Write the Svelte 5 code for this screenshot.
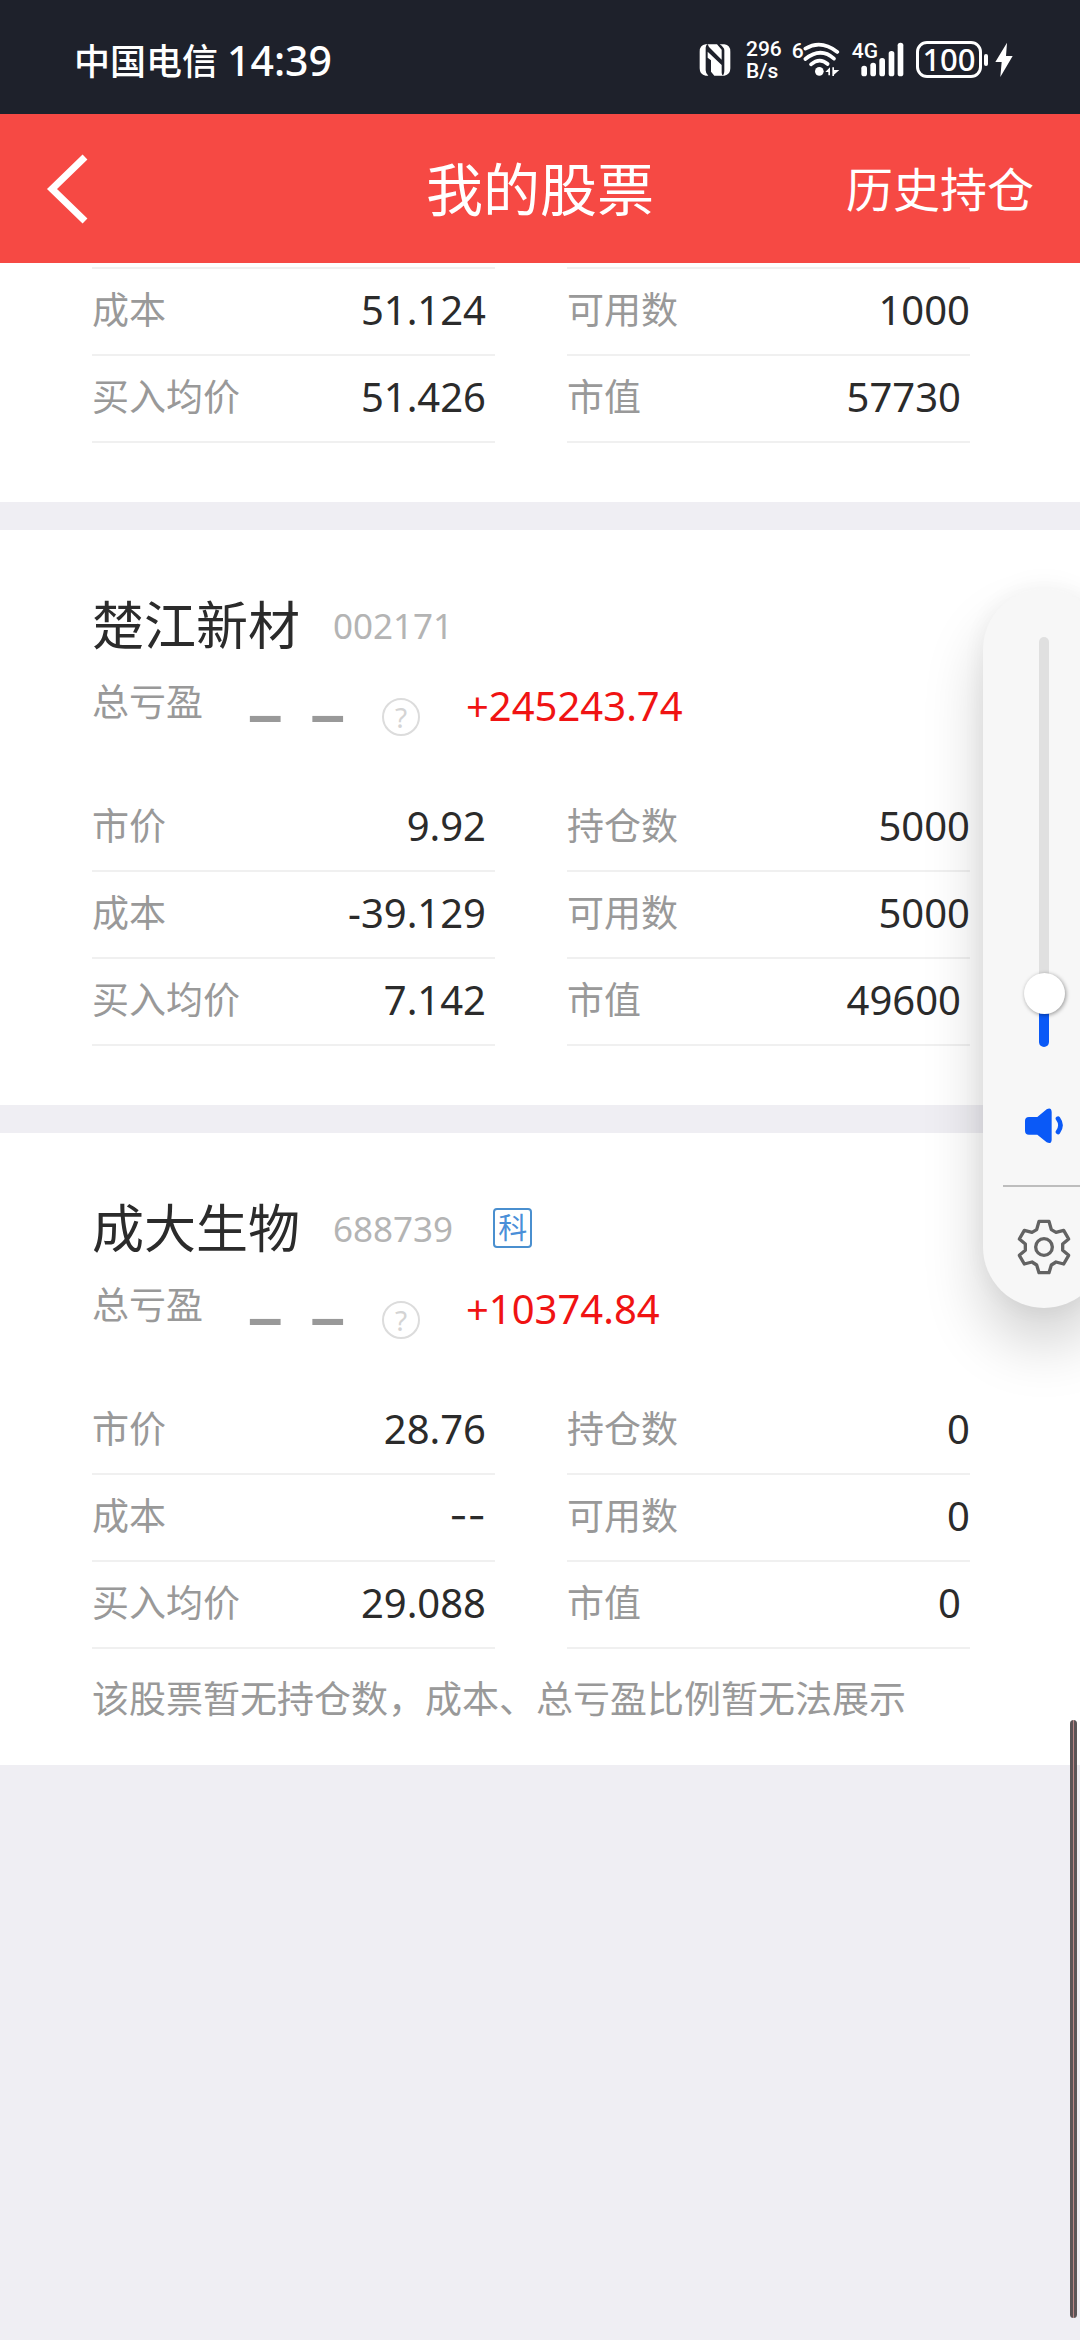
<script>
  const stocks = [
    {
      name: '楚江新材',
      code: '002171',
      tag: '',
      profit: '+245243.74',
      rows: [
        ['市价', '9.92', '持仓数', '5000'],
        ['成本', '-39.129', '可用数', '5000'],
        ['买入均价', '7.142', '市值', '49600']
      ],
      note: ''
    },
    {
      name: '成大生物',
      code: '688739',
      tag: '科',
      profit: '+10374.84',
      rows: [
        ['市价', '28.76', '持仓数', '0'],
        ['成本', '--', '可用数', '0'],
        ['买入均价', '29.088', '市值', '0']
      ],
      note: '该股票暂无持仓数，成本、总亏盈比例暂无法展示'
    }
  ];

  // only the last rows of the first stock are still in view
  const scrolledRows = [
    ['成本', '51.124', '可用数', '1000'],
    ['买入均价', '51.426', '市值', '57730']
  ];

  let volume = $state(9);
</script>

{#snippet figures(rows)}
  <div class="figures">
    {#each rows as [leftLabel, leftValue, rightLabel, rightValue]}
      <dl class="figure">
        <dt>{leftLabel}</dt>
        <dd class="inset" class:blank={leftValue === '--'}>{leftValue}</dd>
      </dl>
      <dl class="figure">
        <dt>{rightLabel}</dt>
        <dd class:inset={rightLabel === '市值'}>{rightValue}</dd>
      </dl>
    {/each}
  </div>
{/snippet}

<div class="status-bar">
  <div class="carrier">
    <span>中国电信</span>
    <span class="clock">14:39</span>
  </div>
  <div class="status-icons">
    <svg class="nfc" width="32" height="34" viewBox="0 0 96 102">
      <path fill="#fff" d="M20 4 Q2 6 2 26 V76 Q2 96 20 98 H28 Q20 92 20 82 V14 Q20 6 26 4 Z" />
      <path fill="#fff" d="M26 4 H54 L68 20 V50 L30 12 Z M26 26 L68 66 V90 Q68 96 74 98 H46 L36 86 V52 L26 44 Z" />
      <path fill="#fff" d="M62 4 H76 Q94 6 94 26 V76 Q94 96 76 98 H72 Q76 92 76 84 V22 Q76 14 62 4 Z" />
    </svg>
    <div class="speed">
      <span>296</span>
      <span>B/s</span>
    </div>
    <div class="wifi">
      <span class="small">6</span>
      <svg width="40" height="36" viewBox="0 0 120 108" fill="none" stroke="#fff" stroke-width="11" stroke-linecap="round">
        <path d="M10 20 Q57 -8 106 30" />
        <path d="M10 51 Q56 14 96 50" />
        <path d="M27 67 Q53 45 77 66" />
        <circle cx="52" cy="88" r="13" fill="#fff" stroke="none" />
        <path fill="#fff" stroke="none" d="M70 90 L84 76 V100 H79 V90 Z M96 102 V76 H91 V102 Z M96 98 L112 84 H96 Z" />
      </svg>
    </div>
    <div class="signal">
      <span class="small">4G</span>
      <svg width="44" height="36" viewBox="0 0 132 108" fill="#fff">
        <rect x="4" y="71" width="17" height="32" rx="8" />
        <rect x="31" y="62" width="17" height="41" rx="8" />
        <rect x="58" y="48" width="17" height="55" rx="8" />
        <rect x="86" y="27" width="17" height="76" rx="8" />
        <rect x="113" y="2" width="17" height="101" rx="8" />
      </svg>
    </div>
    <div class="battery">
      <span class="level">100</span>
      <span class="cap"></span>
      <svg width="18" height="36" viewBox="0 0 54 108">
        <path fill="#fff" d="M36 2 L1 60 H20 L16 105 L53 42 H33 Z" />
      </svg>
    </div>
  </div>
</div>

<header class="nav">
  <button class="back" type="button" aria-label="返回">
    <svg width="44" height="70" viewBox="0 0 44 70">
      <path d="M39 3 L6 35 L39 67" fill="none" stroke="#fff" stroke-width="7" />
    </svg>
  </button>
  <h1>我的股票</h1>
  <a class="history" href="#history">历史持仓</a>
</header>

<main>
  <section class="card scrolled">
    {@render figures(scrolledRows)}
  </section>

  {#each stocks as stock}
    <section class="card" class:noted={stock.note}>
      <div class="stock-title">
        <h2>{stock.name}</h2>
        <span class="code">{stock.code}</span>
        {#if stock.tag}
          <span class="tag">{stock.tag}</span>
        {/if}
      </div>
      <div class="profit">
        <span class="profit-label">总亏盈</span>
        <span class="dashes"><span>–</span><span>–</span></span>
        <button class="help" type="button" aria-label="总亏盈说明">?</button>
        <span class="profit-value">{stock.profit}</span>
      </div>
      {@render figures(stock.rows)}
      {#if stock.note}
        <p class="note">{stock.note}</p>
      {/if}
    </section>
  {/each}
</main>

<div class="scroll-thumb"></div>

<aside class="volume-panel">
  <input
    type="range"
    min="0"
    max="100"
    aria-label="音量"
    bind:value={volume}
    style="--level: {volume}%"
  />
  <button class="speaker" type="button" aria-label="静音">
    <svg width="40" height="40" viewBox="192 168 120 120">
      <path fill="#0a59f7" d="M207 201 H232 L260 178 Q274 171 275 186 V270 Q274 284 260 277 L232 254 H207 Q195 254 195 242 V213 Q195 201 207 201 Z" />
      <path d="M294 206 Q309 226 294 246" fill="none" stroke="#0a59f7" stroke-width="14" stroke-linecap="round" />
    </svg>
  </button>
  <hr />
  <button class="settings" type="button" aria-label="声音设置">
    <svg width="56" height="56" viewBox="168 508 168 168" fill="none" stroke="#636363" stroke-width="10" stroke-linejoin="round">
      <path d="M237 515 H267 L274 540 L288 548 L311 542 L326 568 L308 583 V602 L326 617 L311 643 L288 637 L274 646 L267 669 H237 L230 646 L216 637 L193 643 L178 617 L196 602 V583 L178 568 L193 542 L216 548 L230 540 Z" />
      <circle cx="252" cy="592" r="25" />
    </svg>
  </button>
</aside>

<style>
  :global(body) {
    margin: 0;
    background: #efeef3;
    font-family: "Noto Sans", "Noto Sans CJK SC", sans-serif;
    color: #2b2b2b;
  }

  button {
    padding: 0;
    border: 0;
    background: none;
    font: inherit;
    color: inherit;
  }

  svg {
    display: block;
  }

  .status-bar {
    display: flex;
    justify-content: space-between;
    align-items: center;
    height: 114px;
    padding: 5px 67px 0 74px;
    background: #1e212b;
    color: #fff;
    font-weight: 500;
    box-sizing: border-box;
  }

  .carrier {
    display: flex;
    align-items: center;
    gap: 9px;
    font-size: 36px;
  }

  .clock {
    font-size: 41px;
  }

  .status-icons {
    display: flex;
    align-items: center;
    gap: 10px;
  }

  .speed {
    display: flex;
    flex-direction: column;
    margin-left: 5px;
    font-family: Roboto, sans-serif;
    font-size: 21px;
    line-height: 22px;
  }

  .small {
    font-family: Roboto, sans-serif;
    font-size: 21px;
    line-height: 18px;
  }

  .wifi,
  .signal {
    display: flex;
    align-items: flex-start;
  }

  .wifi .small {
    margin-right: -2px;
  }

  .signal .small {
    margin-right: -18px;
  }

  .battery {
    display: flex;
    align-items: center;
    gap: 2px;
    margin-left: 2px;
  }

  .level {
    width: 66px;
    height: 37px;
    border: 3px solid #fff;
    border-radius: 11px;
    box-sizing: border-box;
    font-size: 31px;
    line-height: 31px;
    text-align: center;
  }

  .cap {
    width: 4px;
    height: 12px;
    margin-right: 5px;
    border-radius: 2px;
    background: #fff;
  }

  .nav {
    display: grid;
    grid-template-columns: 1fr auto 1fr;
    align-items: center;
    height: 149px;
    padding: 0 46px;
    background: #f64944;
    color: #fff;
    box-sizing: border-box;
  }

  .nav h1 {
    margin: 0;
    font-size: 57px;
    font-weight: 400;
    line-height: 80px;
  }

  .history {
    justify-self: end;
    color: inherit;
    font-size: 47px;
    line-height: 80px;
    text-decoration: none;
  }

  main {
    display: flex;
    flex-direction: column;
    gap: 28px;
  }

  .card {
    padding: 60px 110px 59px 92px;
    background: #fff;
  }

  .card.scrolled {
    padding-top: 4px;
  }

  .card.noted {
    padding-bottom: 36px;
  }

  .scrolled .figure:nth-child(-n + 2) {
    border-top: 2px solid #f0f0f0;
  }

  .stock-title {
    display: flex;
    align-items: center;
    height: 70px;
  }

  .stock-title h2 {
    margin: 0;
    font-size: 52px;
    font-weight: 400;
    line-height: 70px;
  }

  .code {
    margin-left: 33px;
    color: #b4b4b4;
    font-size: 35px;
  }

  .tag {
    margin-left: 40px;
    padding: 0 3px;
    border: 2px solid #4a8fcf;
    border-radius: 4px;
    color: #4a8fd8;
    font-size: 29px;
    line-height: 36px;
  }

  .profit {
    display: flex;
    align-items: center;
    height: 80px;
    margin-bottom: 45px;
  }

  .profit-label {
    color: #999;
    font-size: 37px;
  }

  .dashes {
    display: flex;
    gap: 28px;
    margin: 0 37px 0 45px;
    padding-top: 26px;
    color: #999;
    font-family: "Liberation Sans", sans-serif;
    font-size: 62px;
    font-weight: 700;
  }

  .help {
    width: 38px;
    height: 38px;
    margin: 34px 46px 0 0;
    border: 2px solid #dcdcdc;
    border-radius: 50%;
    color: #d4d4d4;
    font-size: 28px;
    line-height: 34px;
  }

  .profit-value {
    padding-top: 10px;
    color: #f01313;
    font-size: 40px;
  }

  .figures {
    display: grid;
    grid-template-columns: 1fr 1fr;
    column-gap: 72px;
  }

  .figure {
    display: flex;
    justify-content: space-between;
    align-items: center;
    height: 81px;
    margin: 0;
    padding-bottom: 4px;
    border-bottom: 2px solid #f0f0f0;
  }

  dt {
    color: #999;
    font-size: 37px;
    line-height: 78px;
  }

  dd {
    margin: 0;
    font-size: 40px;
    line-height: 78px;
  }

  .inset {
    padding-right: 9px;
  }

  .blank {
    font-family: Inter, sans-serif;
  }

  .note {
    margin: 20px 0 0;
    color: #999;
    font-size: 37px;
    line-height: 60px;
  }

  .scroll-thumb {
    position: fixed;
    right: 3px;
    bottom: 22px;
    width: 7px;
    height: 598px;
    border-radius: 4px;
    background: linear-gradient(to right, #5b5456 3px, #b98585 3px, #b98585 4px, #5b5456 4px);
  }

  .volume-panel {
    position: fixed;
    top: 589px;
    right: -25px;
    display: flex;
    flex-direction: column;
    align-items: center;
    width: 122px;
    height: 719px;
    padding-top: 48px;
    border-radius: 61px;
    background: #f7f7f7;
    box-shadow: 0 36px 60px rgba(0, 0, 0, 0.18), 0 0 30px rgba(0, 0, 0, 0.06);
    box-sizing: border-box;
  }

  .volume-panel input {
    appearance: none;
    writing-mode: vertical-lr;
    direction: rtl;
    width: 41px;
    height: 410px;
    margin: 0;
    background: none;
  }

  .volume-panel input::-webkit-slider-runnable-track {
    width: 10px;
    height: 410px;
    border-radius: 5px;
    background: linear-gradient(to top, #0a59f7 calc(var(--level) + 2%), #e0e0e0 calc(var(--level) + 2%));
  }

  .volume-panel input::-webkit-slider-thumb {
    appearance: none;
    width: 41px;
    height: 41px;
    margin-left: -15px;
    border-radius: 50%;
    background: #fff;
    box-shadow: 1px 1px 4px rgba(0, 0, 0, 0.4);
  }

  .speaker {
    margin-top: 59px;
  }

  .volume-panel hr {
    width: 82px;
    height: 2px;
    margin: 39px 0 32px;
    border: 0;
    background: #bdbdbd;
  }
</style>
